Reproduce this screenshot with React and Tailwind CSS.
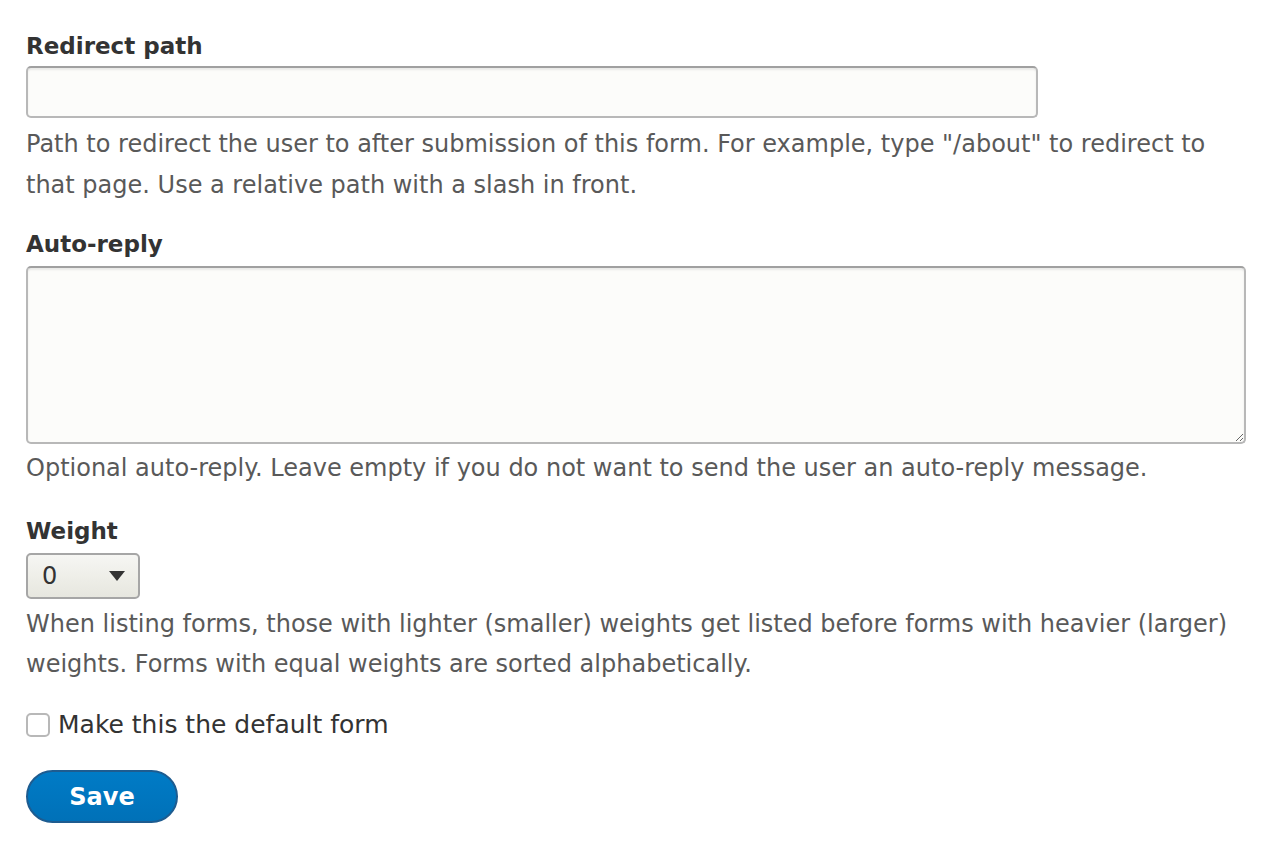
import React from "react";

const font = { fontFamily: '"DejaVu Sans", "Lucida Grande", Verdana, sans-serif' };

const Label = ({ children }) => (
  <label className="block text-[23px] font-bold leading-[28px] text-[#333]">{children}</label>
);

export default function App() {
  return (
    <div className="min-h-[856px] bg-white pl-[26px] pr-[42px] pt-[32px]" style={font}>
      <div className="w-[1220px]">
        {/* redirect path */}
        <Label>Redirect path</Label>
        <input
          type="text"
          className="mt-[6px] block h-[52px] w-[1012px] rounded-[5px] border-2 border-[#b8b8b8] border-t-[#a0a0a0] bg-[#fcfcfa] px-3 shadow-[inset_0_2px_2px_rgba(0,0,0,0.08)] outline-none"
        />
        <p className="mt-[6px] text-[24px] leading-[41px] text-[#595959]">
          Path to redirect the user to after submission of this form. For example, type "/about" to redirect to that
          page. Use a relative path with a slash in front.
        </p>

        {/* auto reply */}
        <div className="mt-[24px]">
          <Label>Auto-reply</Label>
          <textarea
            className="mt-[8px] block h-[178px] w-[1220px] resize-y rounded-[5px] border-2 border-[#b8b8b8] border-t-[#a0a0a0] bg-[#fcfcfa] px-3 shadow-[inset_0_2px_2px_rgba(0,0,0,0.08)] outline-none"
          />
          <p className="mt-[4px] text-[24px] leading-[40px] text-[#595959]">
            Optional auto-reply. Leave empty if you do not want to send the user an auto-reply message.
          </p>
        </div>

        {/* weight */}
        <div className="mt-[29px]">
          <Label>Weight</Label>
          <div className="mt-[8px] flex h-[46px] w-[114px] items-center justify-between rounded-[5px] border-2 border-[#a6a6a6] bg-gradient-to-b from-[#f6f6f3] to-[#e7e7df] pl-[14px] pr-[12px]">
            <span className="text-[24px] text-[#333]">0</span>
            <svg width="18" height="12" viewBox="0 0 18 12">
              <path d="M1 1h16L9 11z" fill="#333" />
            </svg>
          </div>
          <p className="mt-[5px] text-[24px] leading-[40px] text-[#595959]">
            When listing forms, those with lighter (smaller) weights get listed before forms with heavier (larger)
            weights. Forms with equal weights are sorted alphabetically.
          </p>
        </div>

        {/* default */}
        <div className="mt-[26px] flex items-center gap-[8px]">
          <span className="block h-[24px] w-[24px] rounded-[5px] border-2 border-[#b8b8b8] bg-white" />
          <span className="text-[25px] leading-[30px] text-[#333]">Make this the default form</span>
        </div>

        <button className="mt-[30px] flex h-[53px] w-[152px] items-center justify-center rounded-full border-2 border-[#1e5c90] bg-gradient-to-b from-[#007bc6] to-[#0071b8] text-[24px] font-bold text-white">
          Save
        </button>
      </div>
    </div>
  );
}
